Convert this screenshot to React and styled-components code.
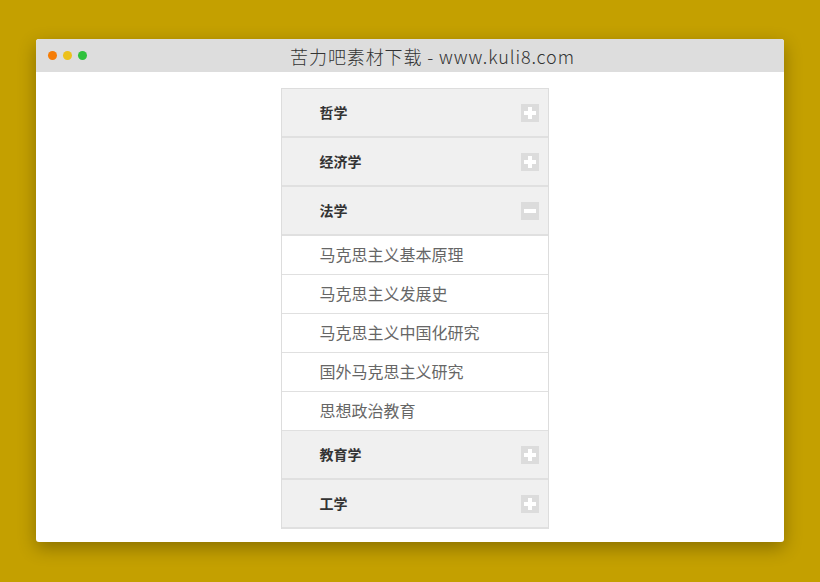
import { useState } from "react";
import styled, { createGlobalStyle } from "styled-components";

const Global = createGlobalStyle`
  html, body {
    margin: 0;
    padding: 0;
    background: #c4a000;
    font-family: "Noto Sans CJK SC", "Liberation Sans", sans-serif;
  }
`;

const data = [
  { title: "哲学", items: [] },
  { title: "经济学", items: [] },
  {
    title: "法学",
    items: [
      "马克思主义基本原理",
      "马克思主义发展史",
      "马克思主义中国化研究",
      "国外马克思主义研究",
      "思想政治教育",
    ],
  },
  { title: "教育学", items: [] },
  { title: "工学", items: [] },
];

export default function App() {
  const [open, setOpen] = useState(2);

  return (
    <>
      <Global />
      <Page>
        <Window>
          <TitleBar>
            <Dots>
              <Dot color="#f57d07" />
              <Dot color="#ecc11c" />
              <Dot color="#2fc13c" />
            </Dots>
            <Title>苦力吧素材下载 - www.kuli8.com</Title>
          </TitleBar>
          <Body>
            <Accordion>
              {data.map((sec, i) => (
                <div key={sec.title}>
                  <Header onClick={() => setOpen(open === i ? -1 : i)}>
                    <span>{sec.title}</span>
                    <Toggle>
                      <Bar />
                      {open !== i && <Bar vertical />}
                    </Toggle>
                  </Header>
                  {open === i &&
                    sec.items.map((it) => <Item key={it}>{it}</Item>)}
                </div>
              ))}
            </Accordion>
          </Body>
        </Window>
      </Page>
    </>
  );
}

const Page = styled.div`
  width: 820px;
  height: 582px;
  padding: 39px 36px 0;
  box-sizing: border-box;
`;

const Window = styled.div`
  width: 748px;
  height: 503px;
  background: #fff;
  border-radius: 3px;
  overflow: hidden;
  box-shadow: 0 6px 18px rgba(0, 0, 0, 0.3);
`;

const TitleBar = styled.div`
  height: 33px;
  background: #dddddd;
  display: flex;
  align-items: center;
`;

const Dots = styled.div`
  display: flex;
  gap: 6px;
  padding-left: 12px;
`;

const Dot = styled.span`
  width: 9px;
  height: 9px;
  border-radius: 50%;
  background: ${(p) => p.color};
`;

const Title = styled.div`
  flex: 1;
  text-align: center;
  padding-right: 6px;
  font-size: 18px;
  font-weight: 300;
  color: #333;
  letter-spacing: 0.9px;
`;

const Body = styled.div`
  display: flex;
  justify-content: center;
  padding-top: 16px;
  padding-left: 9px;
`;

const Accordion = styled.div`
  width: 266px;
  border: 1px solid #dddddd;
  border-bottom: none;
`;

const Header = styled.div`
  height: 47px;
  box-sizing: content-box;
  background: #f0f0f0;
  border-bottom: 2px solid #e0e0e0;
  display: flex;
  align-items: center;
  justify-content: space-between;
  padding: 0 9px 0 38px;
  font-size: 14px;
  font-weight: bold;
  color: #333;
  cursor: pointer;

  & > span:first-child {
    margin-top: -2px;
  }
`;

const Toggle = styled.span`
  position: relative;
  width: 18px;
  height: 18px;
  background: #dcdcdc;
  margin-top: 1px;
`;

const Bar = styled.span`
  position: absolute;
  background: #fff;
  left: ${(p) => (p.vertical ? "7px" : "3px")};
  top: ${(p) => (p.vertical ? "3px" : "7px")};
  width: ${(p) => (p.vertical ? "4px" : "12px")};
  height: ${(p) => (p.vertical ? "12px" : "4px")};
`;

const Item = styled.div`
  height: 39px;
  box-sizing: border-box;
  background: #fff;
  border-bottom: 1px solid #e0e0e0;
  display: flex;
  align-items: center;
  padding: 0 0 3px 38px;
  font-size: 16px;
  color: #666;
`;
